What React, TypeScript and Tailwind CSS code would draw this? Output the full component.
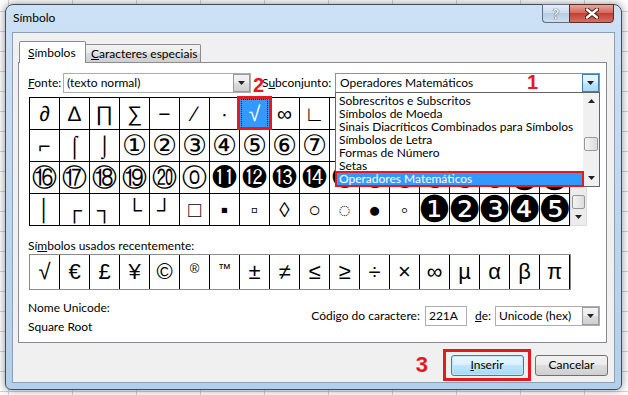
import React from "react";

const UI = "font-['Lato','Open_Sans',sans-serif]";
const SYM = "font-['Liberation_Sans','DejaVu_Sans',sans-serif]";

const rows: string[][] = [
  ["∂", "∆", "∏", "∑", "−", "∕", "∙", "√", "∞", "∟", "", "", "", "", "", "", "", ""],
  ["⌐", "⌠", "⌡", "①", "②", "③", "④", "⑤", "⑥", "⑦", "", "", "", "", "", "", "", ""],
  ["⑯", "⑰", "⑱", "⑲", "⑳", "⓪", "⓫", "⓬", "⓭", "⓮", "⓯", "⓰", "⓱", "⓲", "⓳", "⓴", "❶", "❷"],
  ["│", "┌", "┐", "└", "┘", "□", "▪", "▫", "◊", "○", "◌", "●", "◦", "❶", "❷", "❸", "❹", "❺"],
];
const recent = ["√", "€", "£", "¥", "©", "®", "™", "±", "≠", "≤", "≥", "÷", "×", "∞", "µ", "α", "β", "π"];
const subsets = [
  "Sobrescritos e Subscritos",
  "Símbolos de Moeda",
  "Sinais Diacríticos Combinados para Símbolos",
  "Símbolos de Letra",
  "Formas de Número",
  "Setas",
  "Operadores Matemáticos",
];

const sizeFor = (c: string) => {
  if (/[\u2460-\u2469]/.test(c)) return "text-[28px]";
  if (/[\u2776-\u277f]/.test(c)) return "text-[37px]";
  if (/[\u246a-\u24ff]/.test(c)) return "text-[25px]";
  return "text-[21px]";
};

function Tri({ up }: { up?: boolean }) {
  return (
    <svg width="7" height="4" viewBox="0 0 7 4">
      {up ? <path d="M0 4h7L3.5 0z" fill="#222" /> : <path d="M0 0h7L3.5 4z" fill="#222" />}
    </svg>
  );
}

function DropBtn({ active }: { active?: boolean }) {
  return active ? (
    <div className="w-[17px] h-full flex items-center justify-center border border-[#3c7fb1] bg-[linear-gradient(#eaf6fd,#d9f0fc_50%,#bee6fd_50%,#a7d9f5)]">
      <Tri />
    </div>
  ) : (
    <div className="w-[17px] h-full flex items-center justify-center border border-[#9a9a9a] bg-[linear-gradient(#f2f2f2,#ebebeb_50%,#dddddd_50%,#cfcfcf)]">
      <Tri />
    </div>
  );
}

function Cell({ c, selected, h }: { c: string; selected?: boolean; h: string }) {
  const size = sizeFor(c);
  return (
    <div
      className={`${h} flex items-center justify-center leading-[29px] ${size} ${
        selected ? "bg-[#3399ff] text-white" : "bg-white text-black"
      }`}
    >
      {selected ? (
        <div className="w-[27px] h-[29px] border border-dotted border-black flex items-center justify-center leading-[27px]">{c}</div>
      ) : (
        c
      )}
    </div>
  );
}

export default function App() {
  return (
    <div
      className={`${UI} w-[628px] h-[395px] overflow-hidden bg-white pl-[5px] pt-[4px] text-[12px] text-black [background-image:linear-gradient(to_right,#d4d4d4_1px,transparent_1px),linear-gradient(to_bottom,#d4d4d4_1px,transparent_1px)] [background-size:64px_20px] [background-position:8px_11px]`}
    >
      <div className="w-[617px] h-[386px] rounded-t-[8px] rounded-b-[6px] border border-[#3f4d5e] bg-[linear-gradient(#cde1f5,#bcd5ef_60%,#b4cfeb)] shadow-[0_0_8px_rgba(0,0,0,0.45)] flex flex-col px-[6px] pb-[6px]">
        {/* title bar */}
        <div className="h-[27px] flex items-start justify-between">
          <span className="pl-[1px] pt-[5px] leading-[15px] text-[12px] text-black">Símbolo</span>
          <div className="flex h-[19px] mr-[1px] -mt-px">
            <div className="w-[27px] h-full flex items-center justify-center border border-[#5d6f86] border-r-0 rounded-bl-[4px] bg-[linear-gradient(#e3edf8,#cddcee_45%,#b8cce3_50%,#cfdff0)]">
              <span className="text-[14px] font-bold text-[#f4f8fc] [text-shadow:0_0_1px_#3a4a60,0_0_1px_#3a4a60] leading-none">?</span>
            </div>
            <div className="w-[45px] h-full flex items-center justify-center border border-[#5b2b26] rounded-br-[4px] bg-[linear-gradient(#e8a69c,#d6695d_45%,#c33f33_50%,#d47064)]">
              <svg width="14" height="11" viewBox="0 0 14 11">
                <path d="M2 1.5l10 8M12 1.5l-10 8" stroke="#3b1b18" strokeWidth="4.2" strokeLinecap="round" />
                <path d="M2 1.5l10 8M12 1.5l-10 8" stroke="#ffffff" strokeWidth="2.4" strokeLinecap="round" />
              </svg>
            </div>
          </div>
        </div>

        {/* content */}
        <div className="flex-1 border border-[#8a9fb8] bg-[#f0f0f0] flex flex-col pt-[8px] pl-[5px] pr-[6px]">
          {/* tabs */}
          <div className="flex items-end h-[21px] pl-px relative z-10">
            <div className="w-[67px] h-[22px] -mb-px border border-[#898c95] border-b-0 bg-white flex items-center pl-[8px] rounded-t-[2px]">
              <span>
                <span className="underline">S</span>ímbolos
              </span>
            </div>
            <div className="w-[115px] h-[18px] border border-[#898c95] border-l-0 border-b-0 bg-[linear-gradient(#f2f2f2,#ebebeb_50%,#dddddd_50%,#cfcfcf)] flex items-center pl-[5px] rounded-tr-[2px]">
              <span>
                <span className="underline">C</span>aracteres especiais
              </span>
            </div>
          </div>

          {/* panel */}
          <div className="relative w-[589px] h-[281px] border border-[#898c95] bg-white pt-[10px] pl-[9px] pr-[6px] flex flex-col">
            {/* font / subset row */}
            <div className="flex items-center h-[20px]">
              <span className="w-[35px]">
                <span className="underline">F</span>onte:
              </span>
              <div className="w-[188px] h-[20px] border border-[#abadb3] flex items-stretch">
                <span className="flex-1 pl-[3px] leading-[18px]">(texto normal)</span>
                <DropBtn />
              </div>
              <span className="ml-[11px] w-[73px]">
                S<span className="underline">u</span>bconjunto:
              </span>
              <div className="w-[265px] h-[20px] border border-[#569de5] flex items-stretch bg-white">
                <span className="flex-1 pl-[4px] leading-[18px]">Operadores Matemáticos</span>
                <DropBtn active />
              </div>
            </div>

            {/* symbol grid */}
            <div className="mt-[4px] ml-px flex">
              <div className={`${SYM} grid grid-cols-[repeat(18,29px)] gap-px bg-black border border-black`}>
                {rows.map((r, ri) =>
                  r.map((c, ci) => <Cell key={`${ri}-${ci}`} c={c} h="h-[31px]" selected={ri === 0 && ci === 7} />)
                )}
              </div>
              <div className="w-[17px] h-[129px] bg-[#ececec] border border-[#dcdcdc] flex flex-col">
                <div className="h-[17px] flex items-center justify-center">
                  <Tri up />
                </div>
                <div className="flex-1" />
                <div className="h-[14px] mx-px rounded-[2px] border border-[#979797] bg-[linear-gradient(to_right,#f4f4f4,#dcdcdc)]" />
                <div className="h-[16px] flex items-center justify-center">
                  <Tri />
                </div>
              </div>
            </div>

            {/* recent */}
            <div className="mt-[12px] leading-[15px]">
              Sí<span className="underline">m</span>bolos usados recentemente:
            </div>
            <div className={`${SYM} mt-[1px] ml-px w-[542px] grid grid-cols-[repeat(18,29px)] gap-px bg-black border border-[#8a8a8a]`}>
              {recent.map((c, i) => (
                <div
                  key={i}
                  className={`h-[34px] bg-white flex items-center justify-center leading-none ${
                    c === "®" || c === "™" ? "text-[13px] pb-[8px]" : "text-[22px]"
                  }`}
                >
                  {c}
                </div>
              ))}
            </div>

            {/* unicode info */}
            <div className="flex items-start justify-between">
              <div className="pt-[10px] flex flex-col gap-[4px] leading-[15px]">
                <span>Nome Unicode:</span>
                <span>Square Root</span>
              </div>
              <div className="pt-[16px] flex items-center">
                <span>
                  Códi<span className="underline">g</span>o do caractere:
                </span>
                <div className="ml-[5px] w-[42px] h-[20px] border border-[#abadb3] pl-[3px] leading-[18px]">221A</div>
                <span className="ml-[8px]">
                  <span className="underline">d</span>e:
                </span>
                <div className="ml-[4px] w-[105px] h-[20px] border border-[#abadb3] flex items-stretch">
                  <span className="flex-1 pl-[3px] leading-[18px]">Unicode (hex)</span>
                  <DropBtn />
                </div>
              </div>
            </div>

            {/* overlays: dropdown list */}
            <div className="absolute left-[316px] top-[29px] w-[265px] h-[95px] border border-[#646464] bg-white flex z-20">
              <div className="flex-1 pt-px flex flex-col">
                {subsets.map((s, i) => (
                  <div
                    key={s}
                    className={`h-[13px] leading-[13px] pl-[3px] whitespace-nowrap ${
                      i === subsets.length - 1 ? "bg-[#3399ff] text-white" : ""
                    }`}
                  >
                    {s}
                  </div>
                ))}
              </div>
              <div className="w-[16px] bg-[#f0f0f0] flex flex-col">
                <div className="h-[16px] flex items-center justify-center">
                  <Tri up />
                </div>
                <div className="h-[28px]" />
                <div className="h-[14px] mx-px rounded-[2px] border border-[#979797] bg-[linear-gradient(to_right,#f4f4f4,#dcdcdc)]" />
                <div className="flex-1" />
                <div className="h-[16px] flex items-center justify-center">
                  <Tri />
                </div>
              </div>
            </div>
            <div className="absolute left-[316px] top-[108px] w-[249px] h-[16px] border-2 border-[#e5191f] z-30" />

            {/* annotations */}
            <div className="absolute left-[218px] top-[33px] w-[35px] h-[34px] border-[3px] border-[#e5191f] z-10" />
            <span className={`absolute left-[234px] top-[12px] text-[20px] font-bold text-[#e5191f] leading-none font-['Liberation_Sans',sans-serif]`}>2</span>
            <span className={`absolute left-[508px] top-[9px] text-[20px] font-bold text-[#e5191f] leading-none font-['Liberation_Sans',sans-serif]`}>1</span>
          </div>

          {/* footer */}
          <div className="flex items-center justify-end pt-[6px]">
            <span className="text-[22px] font-bold text-[#e5191f] leading-none font-['Liberation_Sans',sans-serif] mr-[15px]">3</span>
            <div className="w-[88px] h-[32px] border-[3px] border-[#e5191f] flex items-center justify-center">
              <div className="w-[73px] h-[21px] rounded-[3px] border border-[#3c7fb1] bg-[linear-gradient(#eaf6fd,#d9f0fc_50%,#bee6fd_50%,#a7d9f5)] shadow-[inset_0_0_0_1px_#bfe7ff] flex items-center justify-center">
                <span>
                  <span className="underline">I</span>nserir
                </span>
              </div>
            </div>
            <div className="ml-[4px] w-[73px] h-[21px] rounded-[3px] border border-[#707070] bg-[linear-gradient(#f2f2f2,#ebebeb_50%,#dddddd_50%,#cfcfcf)] flex items-center justify-center">
              Cancelar
            </div>
          </div>
        </div>
      </div>
    </div>
  );
}
